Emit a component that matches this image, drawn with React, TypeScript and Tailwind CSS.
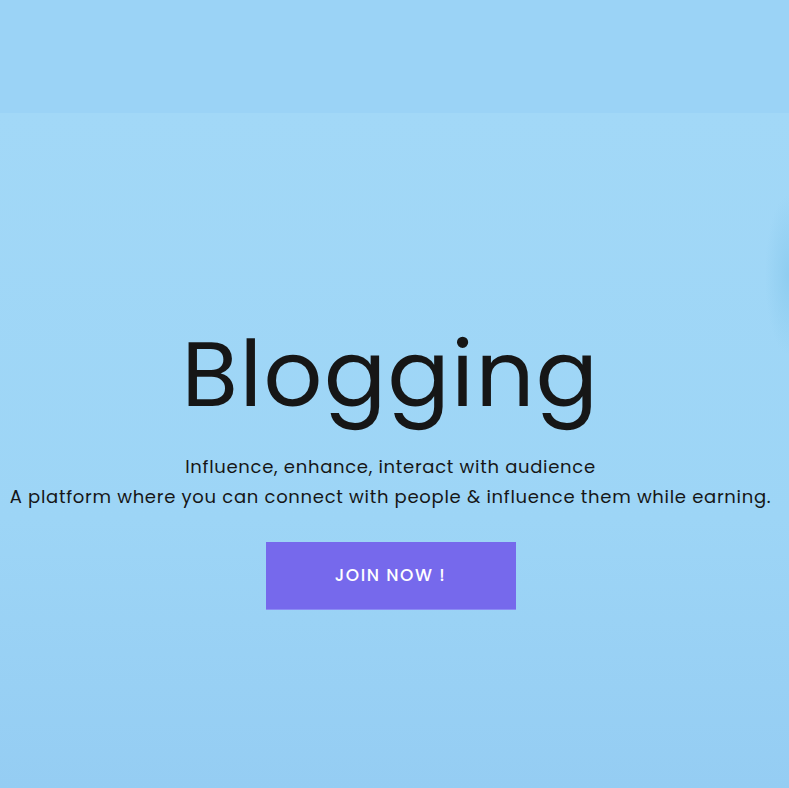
import React from "react";

const App = () => (
  <div className="w-full h-[788px] overflow-hidden font-['Poppins','DejaVu_Sans',sans-serif] text-[#161616]">
    <div className="h-[113px] bg-[#9bd3f6]" />

    <section className="h-[675px] flex flex-col items-center pr-[8px] bg-[radial-gradient(ellipse_24px_80px_at_100%_24%,#8fcdf0,transparent),linear-gradient(#a2d8f7,#9dd5f6_60%,#95cdf3)]">
      <h1 className="mt-[215px] text-[92px] leading-[1] font-normal tracking-[1.5px]">Blogging</h1>
      <p className="mt-[32px] text-[18px] leading-[30px] tracking-[0.7px]">
        Influence, enhance, interact with audience
      </p>
      <p className="text-[18px] leading-[30px] tracking-[0.7px]">
        A platform where you can connect with people &amp; influence them while earning.
      </p>
      <button className="mt-[30px] w-[250px] h-[68px] bg-[#7669ec] text-white text-[17px] font-medium tracking-[1.5px] border-b border-[#8a8cf4]">
        JOIN NOW !
      </button>
    </section>
  </div>
);

export default App;
